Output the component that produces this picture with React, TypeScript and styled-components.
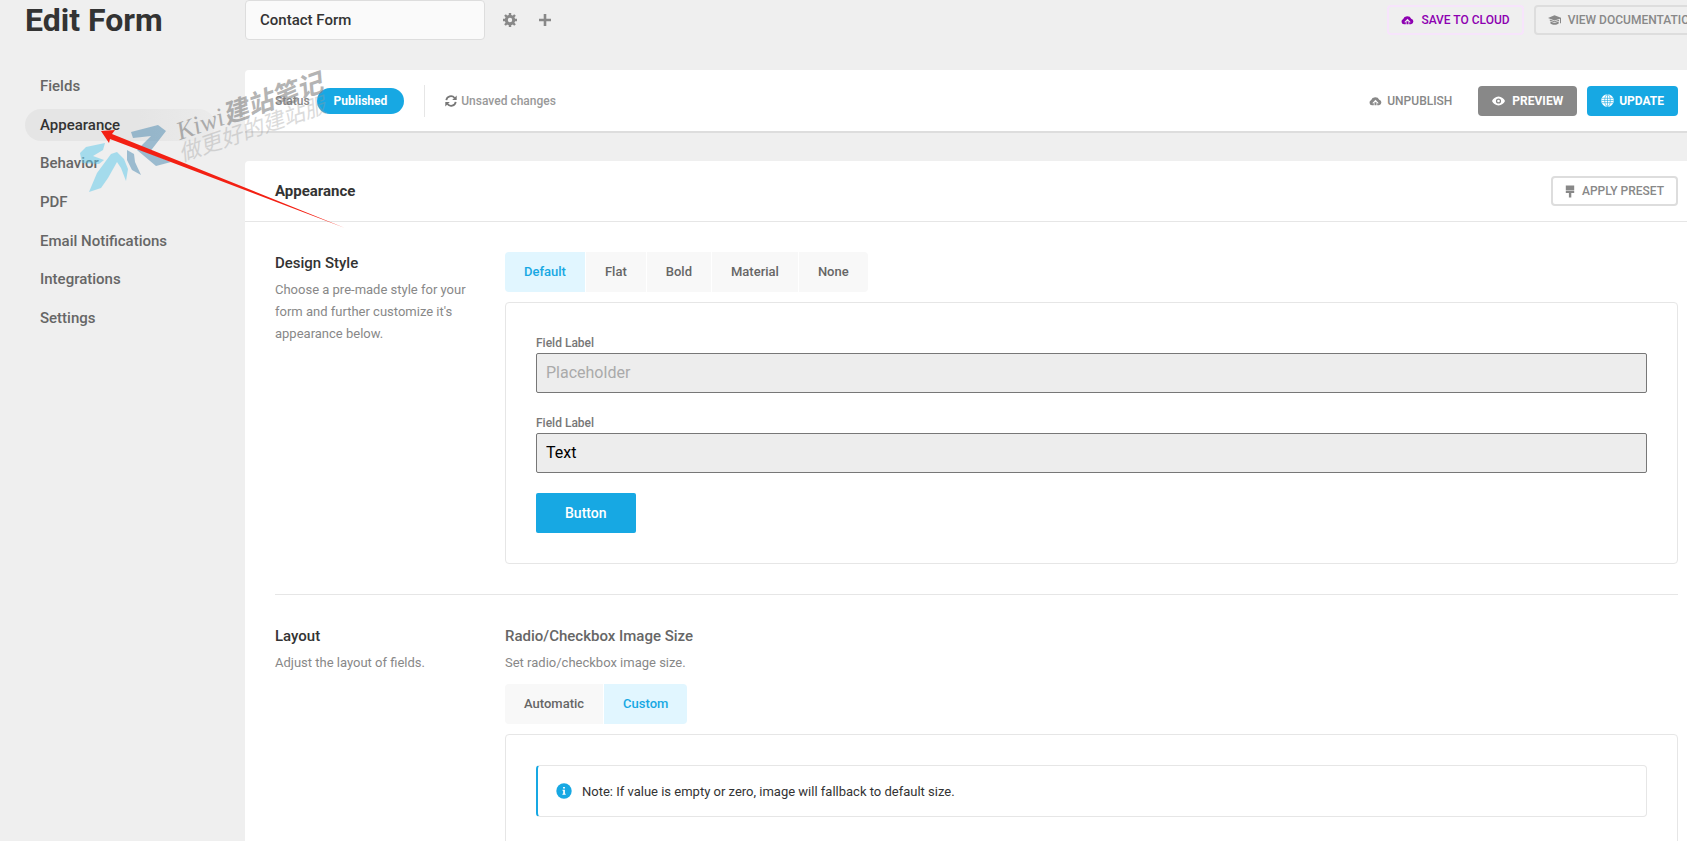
import React from "react";
import styled, { createGlobalStyle } from "styled-components";

const Global = createGlobalStyle`
  * { box-sizing: border-box; }
  body { margin: 0; background: #efefef; font-family: Roboto, "Noto Sans CJK SC", sans-serif; font-size: 13px; color: #888; }
  button, input { font-family: inherit; }
`;

const Page = styled.div`
  position: relative;
  height: 100vh;
  overflow: hidden;
  padding: 0 9px 0 25px;
`;
const TopBar = styled.header`
  display: flex;
  align-items: center;
  height: 40px;
`;
const Title = styled.h1`
  margin: 0;
  flex: 0 0 220px;
  font-size: 32px;
  line-height: 40px;
  font-weight: 700;
  color: #333;
`;
const NameInput = styled.input`
  width: 240px;
  height: 40px;
  padding: 0 14px 1px;
  border: 1px solid #ddd;
  border-radius: 4px;
  background: #fafafa;
  font-size: 15px;
  font-weight: 500;
  color: #333;
  margin-right: 17px;
`;
const IconButton = styled.button`
  display: flex;
  padding: 0;
  margin-right: 20px;
  border: 0;
  background: none;
  color: #888;
`;
const TopActions = styled.div`
  display: flex;
  gap: 10px;
  margin-left: auto;
  margin-right: -34px;
`;
type Kind = "ghost" | "grey" | "blue" | "plain" | "cloud";
const isSolid = (k: Kind) => k === "grey" || k === "blue";
const borders: Record<Kind, string> = {
  ghost: "2px solid #ddd",
  cloud: "2px solid #f7e4fc",
  grey: "0",
  blue: "0",
  plain: "0",
};
const fills: Record<Kind, string> = {
  ghost: "transparent",
  cloud: "transparent",
  grey: "#888",
  blue: "#17a8e3",
  plain: "transparent",
};
const Btn = styled.button<{ $kind: Kind }>`
  display: flex;
  align-items: center;
  gap: ${(p) => (p.$kind === "blue" || p.$kind === "plain" ? 5 : 7)}px;
  height: 30px;
  padding: 0 ${(p) => (p.$kind === "plain" ? 16 : isSolid(p.$kind) ? 14 : 12)}px;
  border: ${(p) => borders[p.$kind]};
  border-radius: 4px;
  background: ${(p) => fills[p.$kind]};
  color: ${(p) => (isSolid(p.$kind) ? "#fff" : p.$kind === "cloud" ? "#8d00b1" : "#888")};
  font-size: 12px;
  line-height: 16px;
  font-weight: ${(p) => (isSolid(p.$kind) ? 700 : 500)};
  white-space: nowrap;
`;
const Body = styled.div`
  display: flex;
  padding-top: 30px;
`;
const Nav = styled.nav`
  flex: 0 0 220px;
`;
const NavList = styled.ul`
  display: flex;
  flex-direction: column;
  justify-content: space-between;
  height: 264px;
  margin: 0;
  padding: 0;
  list-style: none;
`;
const NavLink = styled.a<{ $active?: boolean }>`
  display: block;
  width: 190px;
  padding: 0 15px;
  border-radius: 20px;
  font-size: 15px;
  line-height: 32px;
  font-weight: 500;
  text-decoration: none;
  background: ${(p) => (p.$active ? "linear-gradient(90deg, #e5e5e5 60%, #ebebeb)" : "transparent")};
  color: ${(p) => (p.$active ? "#333" : "#666")};
`;
const Main = styled.main`
  flex: 1;
  min-width: 0;
  margin-right: -9px;
`;
const StatusBar = styled.div`
  display: flex;
  align-items: center;
  height: 61px;
  padding: 0 9px 0 30px;
  background: #fff;
  border-radius: 4px 0 0 0;
  box-shadow: 0 2px 0 #ddd;
  font-size: 12px;
  font-weight: 500;
`;
const Pill = styled.span`
  margin-left: 7px;
  padding: 0 17px;
  line-height: 26px;
  border-radius: 13px;
  background: #17a8e3;
  color: #fff;
  font-weight: 700;
`;
const Unsaved = styled.span`
  display: flex;
  align-items: center;
  gap: 4px;
  height: 32px;
  margin-left: 20px;
  padding-left: 20px;
  border-left: 1px solid #e6e6e6;
  color: #999;
`;
const StatusActions = styled.div`
  display: flex;
  gap: 10px;
  margin-left: auto;
`;
const Box = styled.section`
  margin-top: 30px;
  background: #fff;
  border-radius: 4px 0 0 0;
`;
const BoxHeader = styled.div`
  display: flex;
  align-items: center;
  justify-content: space-between;
  height: 61px;
  padding: 0 9px 0 30px;
  border-bottom: 1px solid #e6e6e6;
`;
const BoxTitle = styled.h2`
  margin: 0;
  font-size: 15px;
  line-height: 30px;
  font-weight: 700;
  color: #333;
`;
const Row = styled.div`
  display: flex;
  gap: 30px;
  margin: 0 9px 0 30px;
  padding: 30px 0;
  border-bottom: 1px solid #e6e6e6;
`;
const RowLabel = styled.div`
  flex: 0 0 200px;
`;
const RowBody = styled.div`
  flex: 1;
  min-width: 0;
`;
const Heading = styled.h3<{ $soft?: boolean }>`
  margin: 0 0 5px;
  font-size: 15px;
  line-height: 22px;
  font-weight: 500;
  color: ${(p) => (p.$soft ? "#666" : "#333")};
`;
const Desc = styled.p`
  margin: 0;
  font-size: 13px;
  line-height: 22px;
  color: #888;
`;
const Tabs = styled.div`
  display: flex;
  gap: 1px;
  margin-bottom: 10px;
  ${Desc} + & { margin-top: 10px; }
`;
const Tab = styled.button<{ $active?: boolean }>`
  height: 40px;
  padding: 0 19px 1px;
  border: 0;
  font-size: 13px;
  font-weight: 500;
  background: ${(p) => (p.$active ? "#e1f6ff" : "#f8f8f8")};
  color: ${(p) => (p.$active ? "#17a8e3" : "#666")};
  &:first-child { border-radius: 4px 0 0 4px; }
  &:last-child { border-radius: 0 4px 4px 0; }
`;
const Panel = styled.div`
  padding: 30px;
  border: 1px solid #e6e6e6;
  border-radius: 4px;
`;
const Field = styled.label`
  display: block;
  margin-bottom: 20px;
  font-size: 12px;
  line-height: 20px;
  font-weight: 500;
  color: #777;
`;
const FieldInput = styled.input`
  display: block;
  width: 100%;
  height: 40px;
  padding: 0 9px 1px;
  border: 1px solid #777;
  border-radius: 2px;
  background: #ededed;
  font-size: 16px;
  color: #000;
  &::placeholder { color: #aaa; opacity: 1; }
`;
const FormButton = styled.button`
  display: block;
  height: 40px;
  padding: 0 29px 1px;
  border: 0;
  border-radius: 2px;
  background: #17a8e3;
  color: #fff;
  font-size: 14px;
  font-weight: 500;
`;
const Note = styled.div`
  display: flex;
  align-items: center;
  gap: 10px;
  height: 52px;
  padding: 0 18px;
  border: 1px solid #e6e6e6;
  border-left: 2px solid #17a8e3;
  border-radius: 4px;
  font-size: 13px;
  color: #333;
`;
const Overlay = styled.svg`
  position: absolute;
  left: 0;
  top: 0;
  pointer-events: none;
`;

const Gear = () => (
  <svg width="16" height="16" viewBox="0 0 16 16" fill="none" stroke="currentColor">
    <circle cx="8" cy="8" r="3.7" strokeWidth="3" />
    <path d="M8 1v3M8 12v3M1 8h3M12 8h3M3 3l2 2M11 11l2 2M13 3l-2 2M5 11l-2 2" strokeWidth="2.4" />
  </svg>
);
const Plus = () => (
  <svg width="14" height="14" viewBox="0 0 14 14" stroke="currentColor" strokeWidth="2.6">
    <path d="M7 1v12M1 7h12" />
  </svg>
);
const Cloud = () => (
  <svg width="13" height="12" viewBox="0 0 13 12">
    <path
      fillRule="evenodd"
      fill="currentColor"
      d="M3 10.200A2.700 2.700 0 0 1 2.200 5 4.200 3.700 0 0 1 10.200 4.700 2.800 2.800 0 0 1 10 10.200H8.200V8.200h1.600L6.500 4.700 3.200 8.200h1.600v2ZM5.500 10.200V7.300h2v2.900Z"
    />
  </svg>
);
const Cap = () => (
  <svg width="13" height="12" viewBox="0 0 13 12" fill="currentColor">
    <path d="M6.500 1.200 13 3.800v5.400h-1V4.700L6.500 6.500 0 3.900ZM1.800 5.400 6.500 7.200l4.600-1.500v1L6.500 8.200 1.800 6.700ZM2.400 7.600l4.100 1.300 4.200-1.300v1.900c-2 1.700-6.200 1.700-8.300 0Z" />
  </svg>
);
const Eye = () => (
  <svg width="13" height="12" viewBox="0 0 13 12">
    <path
      fillRule="evenodd"
      fill="currentColor"
      d="M6.500 1.500C9.500 1.500 12 3.700 13 6c-1 2.300-3.500 4.500-6.500 4.500S1 8.300 0 6c1-2.300 3.500-4.500 6.500-4.500Zm0 1.900a2.600 2.600 0 1 0 0 5.200 2.600 2.600 0 0 0 0-5.200Z"
    />
    <circle cx="6.500" cy="6" r="1.300" fill="currentColor" />
  </svg>
);
const Globe = () => (
  <svg width="13" height="13" viewBox="0 0 13 13">
    <circle cx="6.500" cy="6.500" r="6.300" fill="currentColor" />
    <g fill="none" stroke="#17a8e3" strokeWidth=".6">
      <ellipse cx="6.500" cy="6.500" rx="2.800" ry="6" />
      <path d="M6.500 .5v12M1 4.300h11M1 8.700h11M.3 6.500h12.400" />
    </g>
  </svg>
);
const Brush = () => (
  <svg width="10" height="13" viewBox="0 0 10 13" fill="currentColor">
    <path d="M.8 .5h8.400v4.900H.8ZM.8 6.100h8.400v1.900H6.300V12.500H3.900V8H.8Z" />
  </svg>
);
const Refresh = () => (
  <svg width="12" height="12" viewBox="0 0 12 12" fill="none" stroke="#777" strokeWidth="1.800">
    <path d="M1.300 5.200A4.700 4.700 0 0 1 9.600 3M10.700 6.800A4.700 4.700 0 0 1 2.400 9" />
    <path d="M11.700 .5v4.400H7.200ZM.3 11.500V7.100h4.500Z" fill="#777" stroke="none" />
  </svg>
);
const Info = () => (
  <svg width="16" height="16" viewBox="0 0 16 16">
    <circle cx="8" cy="8" r="7.700" fill="#17a8e3" />
    <path d="M7.100 3.900h1.800v1.700H7.100ZM6.500 6.700h2.400v4h.8v1.100H6.400v-1.100h.8V7.800h-.7Z" fill="#fff" />
  </svg>
);

const Watermark = () => (
  <Overlay width="360" height="240" viewBox="0 0 360 240" aria-hidden="true">
    <g fill="#5cc8ea" opacity=".5">
      <path d="M80 153 86 147 105 143 103 150 93 156 104 160 99 164 82 163Z" />
      <path d="M89 192 97 173 111 154 117 152 124 159 128 169 126 181 121 168 117 162 108 178 101 188Z" />
    </g>
    <g fill="#4988b0" opacity=".5">
      <path d="M131 132 158 125 166 131 149 153 171 162 156 166 137 150 151 136 133 138Z" />
      <path d="M127 150 134 154 135 162 141 175 132 170 127 160Z" />
    </g>
    <g transform="rotate(-19 180 138)">
      <text x="179" y="140" fontSize="26" fill="#777" opacity=".55" fontFamily='"Liberation Serif", "Noto Sans CJK SC", serif' fontStyle="italic">
        Kiwi
        <tspan fontFamily='"Noto Sans CJK SC", sans-serif' fontWeight="700">建站笔记</tspan>
      </text>
      <text x="174" y="161" fontSize="22" fill="#999" opacity=".35" fontFamily='"Noto Sans CJK SC", sans-serif' fontStyle="italic">
        做更好的建站服
      </text>
    </g>
    <path d="M101 131 115 130 112 134 345 228 110 139 109 143Z" fill="#f32013" />
  </Overlay>
);

const navItems = ["Fields", "Appearance", "Behavior", "PDF", "Email Notifications", "Integrations", "Settings"];
const styles = ["Default", "Flat", "Bold", "Material", "None"];
const sizes = ["Automatic", "Custom"];

export default function App() {
  return (
    <Page>
      <Global />
      <TopBar>
        <Title>Edit Form</Title>
        <NameInput aria-label="Form name" defaultValue="Contact Form" />
        <IconButton aria-label="Form settings"><Gear /></IconButton>
        <IconButton aria-label="Add form"><Plus /></IconButton>
        <TopActions>
          <Btn $kind="cloud"><Cloud />SAVE TO CLOUD</Btn>
          <Btn $kind="ghost"><Cap />VIEW DOCUMENTATION</Btn>
        </TopActions>
      </TopBar>
      <Body>
        <Nav>
          <NavList>
            {navItems.map((n) => (
              <li key={n}><NavLink href="#" $active={n === "Appearance"}>{n}</NavLink></li>
            ))}
          </NavList>
        </Nav>
        <Main>
          <StatusBar>
            <span>Status</span>
            <Pill>Published</Pill>
            <Unsaved><Refresh />Unsaved changes</Unsaved>
            <StatusActions>
              <Btn $kind="plain"><Cloud />UNPUBLISH</Btn>
              <Btn $kind="grey"><Eye />PREVIEW</Btn>
              <Btn $kind="blue"><Globe />UPDATE</Btn>
            </StatusActions>
          </StatusBar>
          <Box>
            <BoxHeader>
              <BoxTitle>Appearance</BoxTitle>
              <Btn $kind="ghost"><Brush />APPLY PRESET</Btn>
            </BoxHeader>
            <Row>
              <RowLabel>
                <Heading>Design Style</Heading>
                <Desc>Choose a pre-made style for your form and further customize it's appearance below.</Desc>
              </RowLabel>
              <RowBody>
                <Tabs>
                  {styles.map((s) => <Tab key={s} $active={s === "Default"}>{s}</Tab>)}
                </Tabs>
                <Panel>
                  <Field>Field Label<FieldInput placeholder="Placeholder" /></Field>
                  <Field>Field Label<FieldInput defaultValue="Text" /></Field>
                  <FormButton>Button</FormButton>
                </Panel>
              </RowBody>
            </Row>
            <Row>
              <RowLabel>
                <Heading>Layout</Heading>
                <Desc>Adjust the layout of fields.</Desc>
              </RowLabel>
              <RowBody>
                <Heading $soft>Radio/Checkbox Image Size</Heading>
                <Desc>Set radio/checkbox image size.</Desc>
                <Tabs>
                  {sizes.map((s) => <Tab key={s} $active={s === "Custom"}>{s}</Tab>)}
                </Tabs>
                <Panel>
                  <Note><Info />Note: If value is empty or zero, image will fallback to default size.</Note>
                </Panel>
              </RowBody>
            </Row>
          </Box>
        </Main>
      </Body>
      <Watermark />
    </Page>
  );
}
